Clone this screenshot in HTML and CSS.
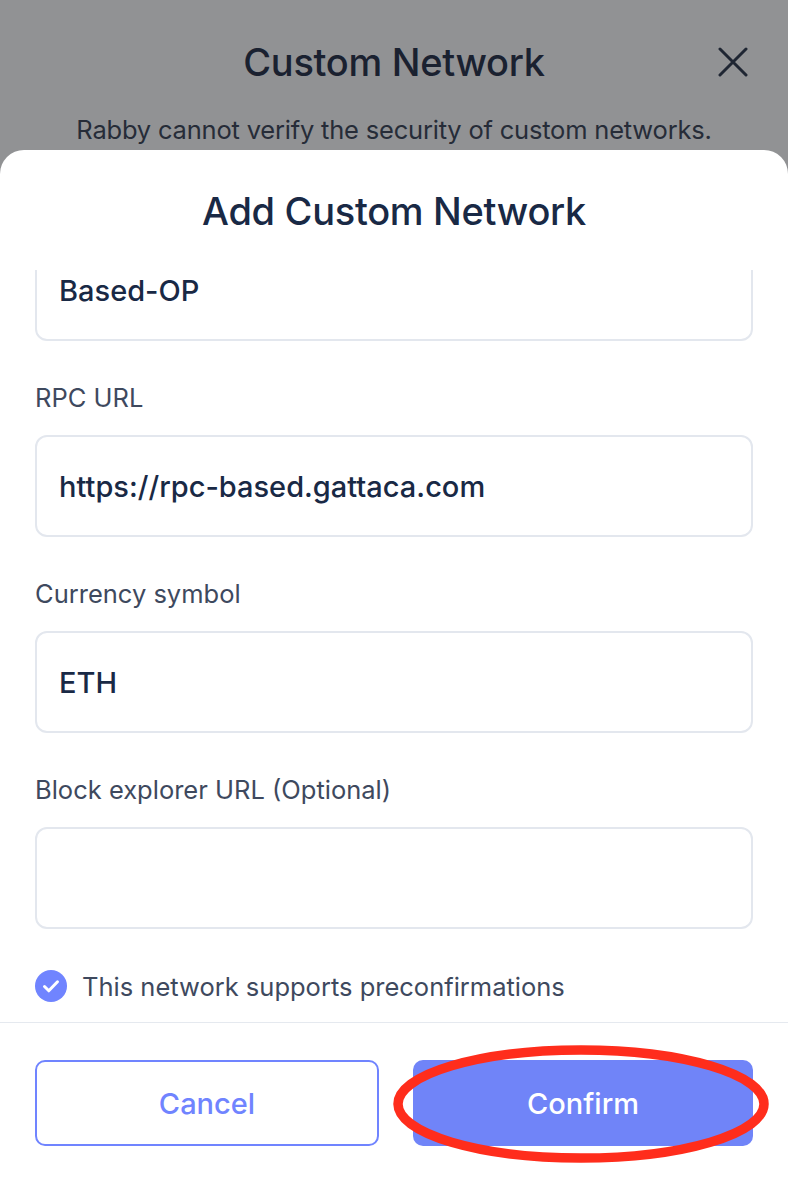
FILE: index.html
```html
<!DOCTYPE html>
<html lang="en">
<head>
<meta charset="utf-8">
<title>Add Custom Network</title>
<link rel="stylesheet" href="styles.css">
</head>
<body>
<div class="screen">
  <header class="backdrop">
    <div class="backdrop-title-row">
      <h1 class="backdrop-title">Custom Network</h1>
      <button class="close-btn" aria-label="Close">
        <svg width="30" height="30" viewBox="0 0 30 30"><path d="M2 2L28 28M28 2L2 28" stroke="#1f2633" stroke-width="3" stroke-linecap="round" fill="none"/></svg>
      </button>
    </div>
    <p class="backdrop-sub">Rabby cannot verify the security of custom networks.</p>
  </header>

  <section class="sheet">
    <h2 class="sheet-title">Add Custom Network</h2>
    <div class="scroll">
      <div class="form">
        <div class="field first">
          <div class="input">Based-OP</div>
        </div>
        <div class="field">
          <label class="label">RPC URL</label>
          <div class="input">https://rpc-based.gattaca.com</div>
        </div>
        <div class="field">
          <label class="label">Currency symbol</label>
          <div class="input">ETH</div>
        </div>
        <div class="field">
          <label class="label">Block explorer URL (Optional)</label>
          <div class="input"></div>
        </div>
        <div class="check-row">
          <svg class="check-icon" width="32" height="32" viewBox="0 0 32 32"><circle cx="16" cy="16" r="16" fill="#7084ff"/><path d="M9.5 16.5l4.3 4.3 8.7-9" stroke="#fff" stroke-width="3" stroke-linecap="round" stroke-linejoin="round" fill="none"/></svg>
          <span class="check-text">This network supports preconfirmations</span>
        </div>
      </div>
    </div>
    <footer class="footer">
      <button class="btn btn-cancel">Cancel</button>
      <button class="btn btn-confirm">Confirm</button>
      <svg class="highlight" width="384" height="126" viewBox="0 0 384 126"><ellipse cx="192" cy="63" rx="183" ry="54" stroke="#ff2d1c" stroke-width="9.5" fill="none"/></svg>
    </footer>
  </section>
</div>
</body>
</html>
```
FILE: styles.css
```css
* { box-sizing: border-box; }
html, body { margin: 0; padding: 0; }
body {
  width: 788px;
  height: 1188px;
  overflow: hidden;
  background: #919294;
  font-family: Inter, "Noto Sans", "Liberation Sans", sans-serif;
}
.screen {
  display: flex;
  flex-direction: column;
  height: 1188px;
}
.backdrop {
  height: 150px;
  flex: none;
}
.backdrop-title-row {
  position: relative;
  display: flex;
  justify-content: center;
  align-items: center;
  height: 62px;
  margin-top: 31px;
}
.backdrop-title {
  margin: 0;
  font-size: 38px;
  font-weight: 500;
  color: #1a2130;
  letter-spacing: -0.3px;
}
.close-btn {
  position: absolute;
  right: 40px;
  top: 16px;
  border: 0;
  background: transparent;
  padding: 0;
  width: 30px;
  height: 30px;
}
.backdrop-sub {
  margin: 22px 0 0;
  text-align: center;
  font-size: 25.5px;
  line-height: 30px;
  color: #262c38;
  letter-spacing: -0.2px;
}
.sheet {
  flex: 1;
  background: #fff;
  border-radius: 24px 24px 0 0;
  display: flex;
  flex-direction: column;
  min-height: 0;
}
.sheet-title {
  margin: 0;
  height: 120px;
  flex: none;
  padding-top: 38px;
  text-align: center;
  font-size: 38px;
  line-height: 46px;
  font-weight: 500;
  color: #192945;
  letter-spacing: -0.3px;
}
.scroll {
  flex: 1;
  overflow: hidden;
  min-height: 0;
}
.form {
  margin-top: -31px;
  padding: 0 35px;
}
.field { margin-bottom: 44px; }
.label {
  display: block;
  font-size: 25.5px;
  line-height: 26px;
  color: #3e495e;
  margin-bottom: 24px;
}
.input {
  height: 102px;
  border: 2px solid #e3e7ee;
  border-radius: 12px;
  padding: 0 22px;
  display: flex;
  align-items: center;
  font-size: 29px;
  font-weight: 500;
  color: #192945;
}
.field:nth-child(4) { margin-bottom: 41px; }
.check-row {
  display: flex;
  align-items: center;
  gap: 15px;
  height: 32px;
  margin-bottom: 20px;
}
.check-icon { flex: none; }
.check-text {
  font-size: 25.5px;
  color: #3e495e;
}
.footer {
  position: relative;
  flex: none;
  border-top: 1px solid #e5e9ef;
  padding: 37px 35px 42px;
  display: flex;
  gap: 34px;
}
.btn {
  flex: 1;
  height: 86px;
  border-radius: 10px;
  font-family: inherit;
  font-size: 29px;
  font-weight: 500;
}
.btn-cancel {
  background: #fff;
  border: 2px solid #7084ff;
  color: #7084ff;
}
.btn-confirm {
  background: #7084f8;
  border: 0;
  color: #fff;
}
.highlight {
  position: absolute;
  left: 389px;
  top: 18px;
  pointer-events: none;
}
```
